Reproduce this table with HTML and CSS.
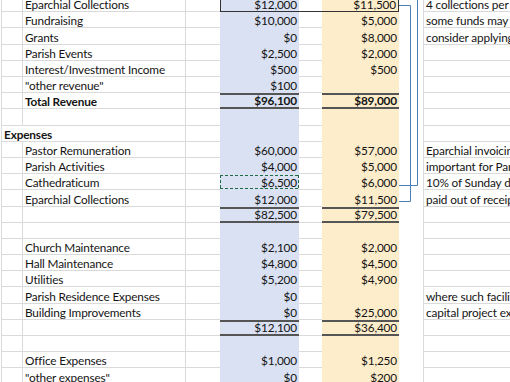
FILE: index.html
```html
<!DOCTYPE html>
<html>
<head>
<meta charset="utf-8">
<title>Parish Budget</title>
<link rel="stylesheet" href="styles.css">
</head>
<body>
<div class="sheet">
  <div class="row boxed">
    <div class="cell a"></div><div class="cell b">Eparchial Collections</div><div class="cell c"></div><div class="cell d">$12,000</div><div class="cell e"></div><div class="cell f">$11,500</div><div class="cell g"></div><div class="cell h">4 collections per year</div>
  </div>
  <div class="row">
    <div class="cell a"></div><div class="cell b">Fundraising</div><div class="cell c"></div><div class="cell d">$10,000</div><div class="cell e"></div><div class="cell f">$5,000</div><div class="cell g"></div><div class="cell h">some funds may be restricted</div>
  </div>
  <div class="row">
    <div class="cell a"></div><div class="cell b">Grants</div><div class="cell c"></div><div class="cell d">$0</div><div class="cell e"></div><div class="cell f">$8,000</div><div class="cell g"></div><div class="cell h">consider applying for grants</div>
  </div>
  <div class="row">
    <div class="cell a"></div><div class="cell b">Parish Events</div><div class="cell c"></div><div class="cell d">$2,500</div><div class="cell e"></div><div class="cell f">$2,000</div><div class="cell g"></div><div class="cell h"></div>
  </div>
  <div class="row">
    <div class="cell a"></div><div class="cell b">Interest/Investment Income</div><div class="cell c"></div><div class="cell d">$500</div><div class="cell e"></div><div class="cell f">$500</div><div class="cell g"></div><div class="cell h"></div>
  </div>
  <div class="row">
    <div class="cell a"></div><div class="cell b">"other revenue"</div><div class="cell c"></div><div class="cell d">$100</div><div class="cell e"></div><div class="cell f"></div><div class="cell g"></div><div class="cell h"></div>
  </div>
  <div class="row total">
    <div class="cell a"></div><div class="cell b">Total Revenue</div><div class="cell c"></div><div class="cell d">$96,100</div><div class="cell e"></div><div class="cell f">$89,000</div><div class="cell g"></div><div class="cell h"></div>
  </div>
  <div class="row">
    <div class="cell a"></div><div class="cell b"></div><div class="cell c"></div><div class="cell d"></div><div class="cell e"></div><div class="cell f"></div><div class="cell g"></div><div class="cell h"></div>
  </div>
  <div class="row heading">
    <div class="cell a wide">Expenses</div><div class="cell c"></div><div class="cell d"></div><div class="cell e"></div><div class="cell f"></div><div class="cell g"></div><div class="cell h"></div>
  </div>
  <div class="row">
    <div class="cell a"></div><div class="cell b">Pastor Remuneration</div><div class="cell c"></div><div class="cell d">$60,000</div><div class="cell e"></div><div class="cell f">$57,000</div><div class="cell g"></div><div class="cell h">Eparchial invoicing</div>
  </div>
  <div class="row">
    <div class="cell a"></div><div class="cell b">Parish Activities</div><div class="cell c"></div><div class="cell d">$4,000</div><div class="cell e"></div><div class="cell f">$5,000</div><div class="cell g"></div><div class="cell h">important for Parish life</div>
  </div>
  <div class="row">
    <div class="cell a"></div><div class="cell b">Cathedraticum</div><div class="cell c"></div><div class="cell d marquee">$6,500</div><div class="cell e"></div><div class="cell f">$6,000</div><div class="cell g"></div><div class="cell h">10% of Sunday donations</div>
  </div>
  <div class="row">
    <div class="cell a"></div><div class="cell b">Eparchial Collections</div><div class="cell c"></div><div class="cell d">$12,000</div><div class="cell e"></div><div class="cell f">$11,500</div><div class="cell g"></div><div class="cell h">paid out of receipts</div>
  </div>
  <div class="row sub">
    <div class="cell a"></div><div class="cell b"></div><div class="cell c"></div><div class="cell d">$82,500</div><div class="cell e"></div><div class="cell f">$79,500</div><div class="cell g"></div><div class="cell h"></div>
  </div>
  <div class="row">
    <div class="cell a"></div><div class="cell b"></div><div class="cell c"></div><div class="cell d"></div><div class="cell e"></div><div class="cell f"></div><div class="cell g"></div><div class="cell h"></div>
  </div>
  <div class="row">
    <div class="cell a"></div><div class="cell b">Church Maintenance</div><div class="cell c"></div><div class="cell d">$2,100</div><div class="cell e"></div><div class="cell f">$2,000</div><div class="cell g"></div><div class="cell h"></div>
  </div>
  <div class="row">
    <div class="cell a"></div><div class="cell b">Hall Maintenance</div><div class="cell c"></div><div class="cell d">$4,800</div><div class="cell e"></div><div class="cell f">$4,500</div><div class="cell g"></div><div class="cell h"></div>
  </div>
  <div class="row">
    <div class="cell a"></div><div class="cell b">Utilities</div><div class="cell c"></div><div class="cell d">$5,200</div><div class="cell e"></div><div class="cell f">$4,900</div><div class="cell g"></div><div class="cell h"></div>
  </div>
  <div class="row">
    <div class="cell a"></div><div class="cell b">Parish Residence Expenses</div><div class="cell c"></div><div class="cell d">$0</div><div class="cell e"></div><div class="cell f"></div><div class="cell g"></div><div class="cell h">where such facilities exist</div>
  </div>
  <div class="row">
    <div class="cell a"></div><div class="cell b">Building Improvements</div><div class="cell c"></div><div class="cell d">$0</div><div class="cell e"></div><div class="cell f">$25,000</div><div class="cell g"></div><div class="cell h">capital project expenses</div>
  </div>
  <div class="row sub">
    <div class="cell a"></div><div class="cell b"></div><div class="cell c"></div><div class="cell d">$12,100</div><div class="cell e"></div><div class="cell f">$36,400</div><div class="cell g"></div><div class="cell h"></div>
  </div>
  <div class="row">
    <div class="cell a"></div><div class="cell b"></div><div class="cell c"></div><div class="cell d"></div><div class="cell e"></div><div class="cell f"></div><div class="cell g"></div><div class="cell h"></div>
  </div>
  <div class="row">
    <div class="cell a"></div><div class="cell b">Office Expenses</div><div class="cell c"></div><div class="cell d">$1,000</div><div class="cell e"></div><div class="cell f">$1,250</div><div class="cell g"></div><div class="cell h"></div>
  </div>
  <div class="row">
    <div class="cell a"></div><div class="cell b">"other expenses"</div><div class="cell c"></div><div class="cell d">$0</div><div class="cell e"></div><div class="cell f">$200</div><div class="cell g"></div><div class="cell h"></div>
  </div>
  <div class="row">
    <div class="cell a"></div><div class="cell b"></div><div class="cell c"></div><div class="cell d"></div><div class="cell e"></div><div class="cell f"></div><div class="cell g"></div><div class="cell h"></div>
  </div>
</div>
<svg class="links" width="510" height="382" viewBox="0 0 510 382">
  <path d="M399 5.5 H410.5 V201.5 H399" />
  <path d="M417.5 0 V185.5 H399" />
</svg>
</body>
</html>
```

FILE: styles.css
```css
html, body {
  margin: 0;
  padding: 0;
  background: #ffffff;
  width: 510px;
  height: 382px;
  overflow: hidden;
}

body {
  position: relative;
  font-family: Lato, "Liberation Sans", sans-serif;
  font-size: 11.8px;
  letter-spacing: -0.15px;
  color: #141414;
}

.sheet {
  display: flex;
  flex-direction: column;
  width: 640px;
  margin-top: -3.9px;
  margin-left: 1px;
}

.row {
  display: grid;
  grid-template-columns: 21px 163px 35px 79px 23px 77px 24px 1fr;
  height: 16.2px;
}

.cell {
  box-sizing: border-box;
  display: flex;
  align-items: flex-end;
  padding: 0 2px 0 2px;
  line-height: 12px;
  white-space: nowrap;
  border-bottom: 1px solid #dadada;
  min-width: 0;
}

.a, .b, .c, .h {
  border-left: 1px solid #dadada;
}

.wide {
  grid-column: span 2;
  font-weight: bold;
}

.d, .f {
  justify-content: flex-end;
  border-bottom: none;
  padding-bottom: 1px;
}

.d {
  background: #d9e1f2;
}

.f {
  background: #fdedca;
}

.g {
  border-bottom: none;
  background: #ffffff;
}

.total .b,
.total .d,
.total .f {
  font-weight: bold;
}

.total .d, .total .f,
.sub .d, .sub .f {
  border-top: 2px solid #555555;
  border-bottom: 2px solid #555555;
  padding-bottom: 0;
}

.boxed .d {
  border-left: 1px solid #333333;
  border-bottom: 1px solid #333333;
  padding-bottom: 0;
}

.boxed .e {
  border-bottom: 1px solid #333333;
}

.boxed .f {
  border-right: 1px solid #333333;
  border-bottom: 1px solid #333333;
  padding-bottom: 0;
}

.marquee {
  position: relative;
}

.marquee::after {
  content: "";
  position: absolute;
  left: 0;
  right: 0;
  top: 1px;
  bottom: 1px;
  background:
    repeating-linear-gradient(90deg, #1f6b45 0 3px, transparent 3px 5px) left top / 100% 1px no-repeat,
    repeating-linear-gradient(90deg, #1f6b45 0 3px, transparent 3px 5px) left bottom / 100% 1px no-repeat,
    repeating-linear-gradient(180deg, #1f6b45 0 3px, transparent 3px 5px) left top / 1px 100% no-repeat,
    repeating-linear-gradient(180deg, #1f6b45 0 3px, transparent 3px 5px) right top / 1px 100% no-repeat;
}

.links {
  position: absolute;
  left: 0;
  top: 0;
  pointer-events: none;
}

.links path {
  fill: none;
  stroke: #4f7db5;
  stroke-width: 1;
}
```
